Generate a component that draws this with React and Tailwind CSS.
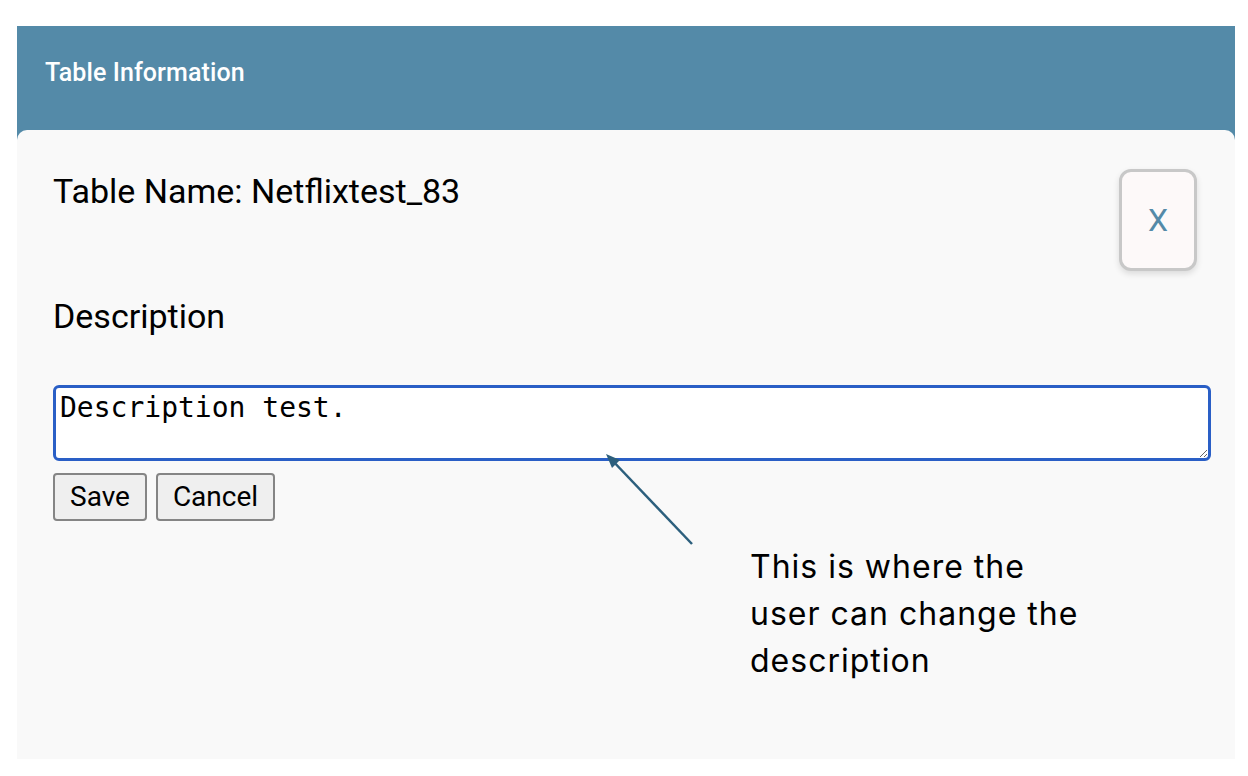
export default function App() {
  return (
    <div className="min-h-screen bg-white pt-[26px] px-[13px]" style={{ fontFamily: "Roboto, 'Liberation Sans', sans-serif" }}>
      <div className="ml-[4px] w-[1218px] bg-[#548aa8]">
        <div className="h-[104px] flex items-center pl-[28px] pb-[10px]">
          <h1 className="text-[25px] leading-[30px] text-white font-medium tracking-[0.1px]">Table Information</h1>
        </div>
        <div className="relative h-[629px] rounded-t-[10px] bg-[#f9f9f9] pl-[36px] pr-[24px]">
          <div className="flex items-start justify-between">
            <p className="pt-[41px] text-[34px] leading-[40px] text-black">Table Name: Netflixtest_83</p>
            <button className="mt-[39px] mr-[14px] w-[78px] h-[102px] rounded-[12px] border-[3px] border-[#c8c8c8] bg-[#fdf9f9] shadow-[0_3px_6px_rgba(0,0,0,0.12)] text-[32px] text-[#548aa8]">
              X
            </button>
          </div>
          <p className="mt-[25px] text-[34px] leading-[40px] text-black">Description</p>
          <textarea
            defaultValue="Description test."
            className="mt-[49px] block w-[1158px] h-[76px] rounded-[6px] border-[3px] border-[#2a5fc6] bg-white px-[4px] py-[3px] text-[28px] leading-[34px] text-black outline-none"
            style={{ fontFamily: "'DejaVu Sans Mono', monospace" }}
          />
          <div className="mt-[12px] flex gap-[9px]">
            <button className="h-[48px] px-[15px] rounded-[4px] border-2 border-[#858585] bg-[#efefef] text-[28px] leading-[32px] text-black">Save</button>
            <button className="h-[48px] px-[15px] rounded-[4px] border-2 border-[#858585] bg-[#efefef] text-[28px] leading-[32px] text-black">Cancel</button>
          </div>
          <div className="ml-[697px] mt-[22px] text-[32px] leading-[47px] tracking-[1px] text-black" style={{ fontFamily: "Inter, 'Noto Sans', sans-serif" }}>
            <p>This is where the</p>
            <p>user can change the</p>
            <p>description</p>
          </div>
          <svg className="absolute left-[585px] top-[318px]" width="100" height="100" viewBox="0 0 100 100">
            <line x1="90" y1="96" x2="8" y2="10" stroke="#2c5f7d" strokeWidth="2.5" />
            <polygon points="4,6 18,12 10,20" fill="#2c5f7d" />
          </svg>
        </div>
      </div>
    </div>
  );
}
